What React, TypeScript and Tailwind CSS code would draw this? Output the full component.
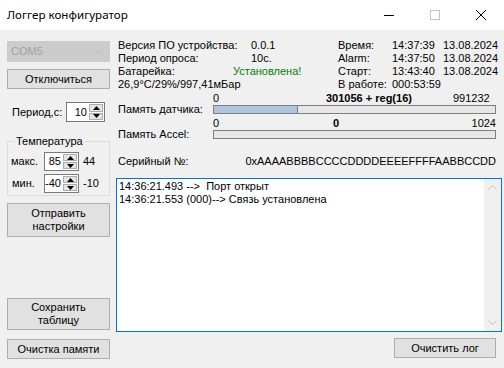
import React from "react";

function Btn({ className, children }: { className: string; children: React.ReactNode }) {
  return (
    <div className={"flex flex-col items-center justify-center border border-[#adadad] bg-[#e1e1e1] text-center text-black " + className}>
      {children}
    </div>
  );
}

function Arrow({ up }: { up: boolean }) {
  return (
    <svg width="7" height="4" viewBox="0 0 7 4">
      {up ? <path d="M0 4 L3.5 0 L7 4 Z" fill="#000" /> : <path d="M0 0 L3.5 4 L7 0 Z" fill="#000" />}
    </svg>
  );
}

function Spin({ w, h, value }: { w: string; h: string; value: string }) {
  return (
    <div className={"flex border border-[#7a7a7a] bg-white " + w + " " + h}>
      <div className="flex flex-1 items-center justify-end pr-[1px]">{value}</div>
      <div className="flex w-[16px] flex-col gap-[1px] p-[1px]">
        <div className="flex flex-1 items-center justify-center border border-[#adadad] bg-[#e5e5e5]">
          <Arrow up />
        </div>
        <div className="flex flex-1 items-center justify-center border border-[#adadad] bg-[#e5e5e5]">
          <Arrow up={false} />
        </div>
      </div>
    </div>
  );
}

function Bar({ fill }: { fill: number }) {
  return (
    <div className="flex h-[9px] w-[283px] border border-[#7f7f7f] bg-[#e6e6e6]">
      {fill > 0 && <div className="h-full border-r border-[#7f7f7f] bg-[#b0c4de]" style={{ width: fill }} />}
    </div>
  );
}

export default function App() {
  return (
    <div className="h-[368px] w-[504px] overflow-hidden bg-[#f0f0f0] font-['Liberation_Sans',Arial,sans-serif] text-[11px] leading-[13px] text-black">
      {/* title bar */}
      <div className="flex h-[30px] items-center bg-white">
        <div className="ml-[7px] flex-1 font-['Noto_Sans',sans-serif] text-[11.6px] leading-[16px]">Логгер конфигуратор</div>
        <div className="flex w-[46px] items-center justify-center">
          <div className="h-[1px] w-[10px] bg-black" />
        </div>
        <div className="flex w-[46px] items-center justify-center">
          <div className="h-[10px] w-[10px] border border-[#c4c4c4]" />
        </div>
        <div className="flex w-[46px] items-center justify-center">
          <svg width="10" height="10" viewBox="0 0 10 10">
            <path d="M0 0 L10 10 M10 0 L0 10" stroke="#000" strokeWidth="1" />
          </svg>
        </div>
      </div>

      <div className="flex">
        {/* left column */}
        <div className="ml-[7px] flex w-[103px] flex-col">
          <div className="mt-[11px] flex h-[21px] items-center border border-[#cccccc] bg-[#cccccc] pl-[3px] text-[#a0a0a0]">
            <span className="flex-1">COM5</span>
            <svg className="mr-[6px]" width="8" height="5" viewBox="0 0 8 5">
              <path d="M0.5 0.5 L4 4 L7.5 0.5" stroke="#b8b8b8" fill="none" />
            </svg>
          </div>
          <Btn className="mt-[7px] h-[20px]">Отключиться</Btn>
          <div className="mt-[13px] flex h-[20px] items-center">
            <span className="ml-[5px] w-[54px]">Период,с:</span>
            <Spin w="w-[39px]" h="h-[20px]" value="10" />
          </div>
          <fieldset className="mt-[13px] h-[61px] border border-[#dcdcdc] px-0 pb-0">
            <legend className="ml-[6px] px-[2px]">Температура</legend>
            <div className="mt-[4px] flex h-[19px] items-center">
              <span className="ml-[3px] w-[33px]">макс.</span>
              <Spin w="w-[35px]" h="h-[19px]" value="85" />
              <span className="ml-[4px]">44</span>
            </div>
            <div className="mt-[3px] flex h-[19px] items-center">
              <span className="ml-[4px] w-[32px]">мин.</span>
              <Spin w="w-[35px]" h="h-[19px]" value="-40" />
              <span className="ml-[4px]">-10</span>
            </div>
          </fieldset>
          <Btn className="mt-[7px] h-[34px]">
            <span>Отправить</span>
            <span>настройки</span>
          </Btn>
          <Btn className="mt-[61px] h-[32px]">
            <span>Сохранить</span>
            <span>таблицу</span>
          </Btn>
          <Btn className="mt-[9px] h-[20px]">Очистка памяти</Btn>
        </div>

        {/* right column */}
        <div className="ml-[6px] flex w-[386px] flex-col">
          <div className="mt-[9px] flex">
            <div className="w-[222px] pl-[2px]">
              <div className="flex">
                <span className="w-[133px]">Версия ПО устройства:</span>
                <span>0.0.1</span>
              </div>
              <div className="flex">
                <span className="w-[133px]">Период опроса:</span>
                <span>10с.</span>
              </div>
              <div className="flex">
                <span className="w-[115px]">Батарейка:</span>
                <span className="text-[#008000]">Установлена!</span>
              </div>
              <div>26,9°C/29%/997,41мБар</div>
            </div>
            <div>
              <div className="flex">
                <span className="w-[54px]">Время:</span>
                <span className="w-[51px]">14:37:39</span>
                <span>13.08.2024</span>
              </div>
              <div className="flex">
                <span className="w-[54px]">Alarm:</span>
                <span className="w-[51px]">14:37:50</span>
                <span>13.08.2024</span>
              </div>
              <div className="flex">
                <span className="w-[54px]">Старт:</span>
                <span className="w-[51px]">13:43:40</span>
                <span>13.08.2024</span>
              </div>
              <div className="flex">
                <span className="w-[54px]">В работе:</span>
                <span>000:53:59</span>
              </div>
            </div>
          </div>

          {/* memory bars */}
          <div className="mt-[1px] flex">
            <div className="w-[97px]" />
            <div className="flex w-[283px]">
              <span className="w-[113px]">0</span>
              <span className="w-[127px] font-bold">301056 + reg(16)</span>
              <span>991232</span>
            </div>
          </div>
          <div className="flex h-[9px] items-center">
            <span className="w-[97px] pl-[2px]">Память датчика:</span>
            <Bar fill={84} />
          </div>
          <div className="mt-[3px] flex">
            <div className="w-[97px]" />
            <div className="flex w-[283px]">
              <span className="w-[120px]">0</span>
              <span className="font-bold">0</span>
              <span className="ml-auto">1024</span>
            </div>
          </div>
          <div className="flex h-[9px] items-center">
            <span className="w-[97px] pl-[2px]">Память Accel:</span>
            <Bar fill={0} />
          </div>

          <div className="mt-[16px] flex justify-between pl-[2px] pr-[6px]">
            <span>Серийный №:</span>
            <span>0xAAAABBBBCCCCDDDDEEEEFFFFAABBCCDD</span>
          </div>

          <div className="mt-[10px] flex h-[154px] border border-[#0078d7] bg-white">
            <div className="flex-1 pl-[2px] pt-[1px]">
              <div>14:36:21.493 --&gt;&nbsp; Порт открыт</div>
              <div>14:36:21.553 (000)--&gt; Связь установлена</div>
            </div>
            <div className="flex w-[17px] flex-col items-center justify-between bg-[#f0f0f0] py-[6px]">
              <svg width="9" height="5" viewBox="0 0 9 5">
                <path d="M0.5 4.5 L4.5 0.5 L8.5 4.5" stroke="#c0c0c0" fill="none" />
              </svg>
              <svg width="9" height="5" viewBox="0 0 9 5">
                <path d="M0.5 0.5 L4.5 4.5 L8.5 0.5" stroke="#c0c0c0" fill="none" />
              </svg>
            </div>
          </div>

          <div className="mr-[6px] mt-[6px] flex justify-end">
            <Btn className="h-[20px] w-[102px]">Очистить лог</Btn>
          </div>
        </div>
      </div>
    </div>
  );
}
